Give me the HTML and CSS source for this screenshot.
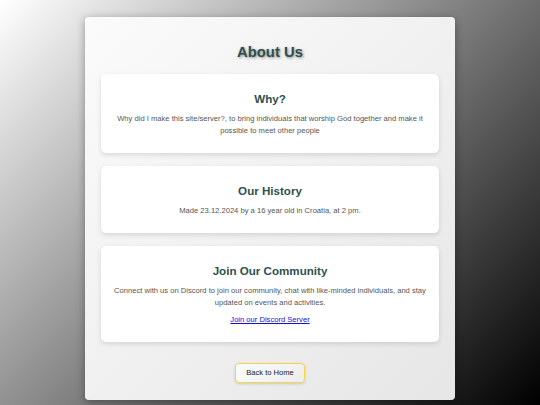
FILE: index.html
```html
<!DOCTYPE html>
<html lang="en">
<head>
<meta charset="utf-8">
<title>About Us</title>
<link rel="stylesheet" href="styles.css">
</head>
<body>
<div class="container">
  <h1 class="title">About Us</h1>
  <section class="card">
    <h2 class="card-title">Why?</h2>
    <p class="card-text">Why did I make this site/server?, to bring individuals that worship God together and make it possible to meet other people</p>
  </section>
  <section class="card">
    <h2 class="card-title">Our History</h2>
    <p class="card-text">Made 23.12.2024 by a 16 year old in Croatia, at 2 pm.</p>
  </section>
  <section class="card">
    <h2 class="card-title">Join Our Community</h2>
    <p class="card-text">Connect with us on Discord to join our community, chat with like-minded individuals, and stay updated on events and activities.</p>
    <p class="card-link"><a href="#">Join our Discord Server</a></p>
  </section>
  <div class="actions">
    <a class="btn" href="#">Back to Home</a>
  </div>
</div>
</body>
</html>
```
FILE: styles.css
```css
html, body {
  margin: 0;
  height: 100%;
}
body {
  font-family: "Liberation Sans", Arial, sans-serif;
  background: linear-gradient(135deg, #ffffff 0%, #000000 100%);
  overflow: hidden;
}
.container {
  width: 370px;
  box-sizing: border-box;
  margin: 17px auto 0;
  padding: 26px 16px 17px;
  background: linear-gradient(135deg, #fbfbfb 0%, #e6e6e6 100%);
  border-radius: 4px;
  box-shadow: 0 2px 8px rgba(0, 0, 0, 0.35);
  display: flex;
  flex-direction: column;
  gap: 13px;
}
.title {
  margin: 0;
  font-size: 14.8px;
  line-height: 18px;
  text-align: center;
  color: #2f4f4f;
  text-shadow: 1px 1px 3px rgba(0, 0, 0, 0.45);
}
.card {
  background: #ffffff;
  border-radius: 5px;
  box-shadow: 0 2px 5px rgba(0, 0, 0, 0.12);
  padding: 16px 10px 16px;
  text-align: center;
  display: flex;
  flex-direction: column;
  gap: 6px;
}
.card-title {
  margin: 0;
  font-size: 11.6px;
  line-height: 17px;
  color: #2f4f4f;
}
.card-text, .card-link {
  margin: 0;
  font-size: 7.6px;
  line-height: 12px;
  color: #555555;
}
.card-link {
  margin-top: -1px;
}
.card-link a {
  color: #1a0dcc;
}
.actions {
  display: flex;
  justify-content: center;
  padding-top: 8px;
}
.btn {
  display: inline-block;
  padding: 4px 10px;
  font-size: 7.6px;
  line-height: 10px;
  color: #222;
  text-decoration: none;
  background: linear-gradient(135deg, #fafafa, #eeeeee);
  border: 1px solid #f0d64a;
  border-radius: 4px;
  box-shadow: 0 1px 3px rgba(0,0,0,0.15);
}
```
